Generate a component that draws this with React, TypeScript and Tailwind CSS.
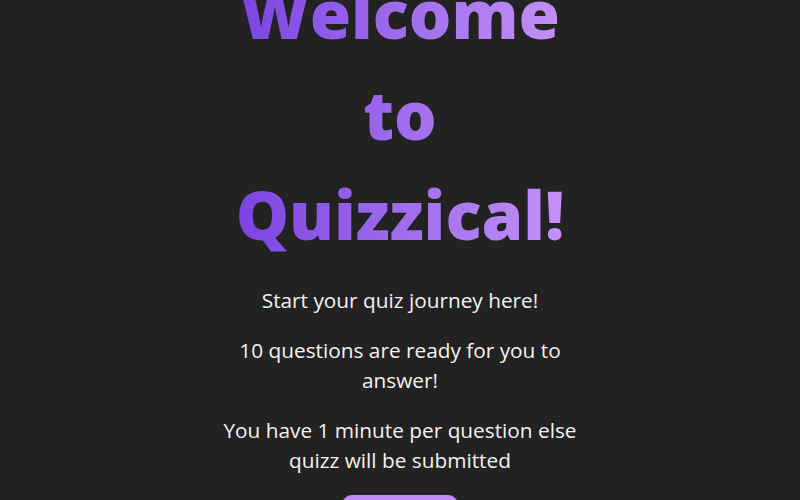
import React from "react";

export default function App() {
  return (
    <div
      className="h-[500px] w-full overflow-hidden bg-[#222222] flex flex-col items-center justify-center text-center"
      style={{ fontFamily: '"Open Sans", sans-serif' }}
    >
      <h1 className="w-[360px] text-[67px] leading-[1.5] font-extrabold bg-gradient-to-r from-[#7a3de0] to-[#c794f7] bg-clip-text text-transparent shrink-0">
        Welcome to Quizzical!
      </h1>
      <p className="mt-5 w-[380px] text-[20.8px] leading-[30px] text-[#f2f2f2] font-medium shrink-0">
        Start your quiz journey here!
      </p>
      <p className="mt-5 w-[380px] text-[20.8px] leading-[30px] text-[#f2f2f2] font-medium shrink-0">
        10 questions are ready for you to answer!
      </p>
      <p className="mt-5 w-[380px] text-[20.8px] leading-[30px] text-[#f2f2f2] font-medium shrink-0">
        You have 1 minute per question else quizz will be submitted
      </p>
      <button className="mt-5 shrink-0 w-[116px] h-[42px] rounded-[10px] bg-[#c08af7] text-white text-[18px] font-semibold">
        Start
      </button>
    </div>
  );
}
